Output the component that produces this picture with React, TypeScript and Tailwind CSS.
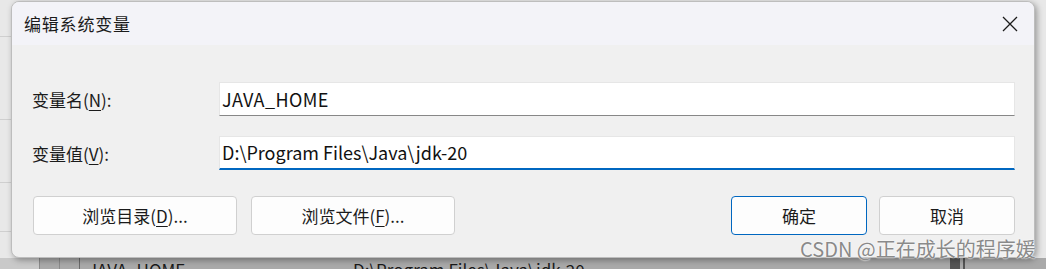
import React from "react";

const font = { fontFamily: '"Noto Sans CJK SC", "Noto Sans", sans-serif' };

function U({ c }: { c: string }) {
  return <span className="underline underline-offset-[3px] decoration-1">{c}</span>;
}

export default function App() {
  return (
    <div className="relative w-[1046px] h-[269px] overflow-hidden bg-[#e8e8e8]" style={font}>
      {/* background window behind */}
      <div className="absolute left-0 top-0 w-[11px] h-[269px] flex flex-col">
        <div className="h-[37px] border-b border-[#cfcfcf]" />
        <div className="h-[83px] border-b border-[#cfcfcf]" />
        <div className="h-[63px] border-b border-[#cfcfcf]" />
        <div className="h-[49px] border-b border-[#cfcfcf]" />
      </div>
      <div className="absolute left-0 top-[258px] w-[1046px] h-[11px] bg-[#a9a9a9] flex">
        <div className="w-[40px] h-full bg-[#c9c9c9] border-r border-[#8a8a8a]" />
        <div className="w-[20px] h-full border-r border-[#8a8a8a]" />
        <div className="w-[20px] h-full border-r border-[#6a6a6a]" />
        <div className="relative w-[870px] h-full">
          <span className="absolute left-[8px] top-[2px] text-[17px] leading-[20px] text-[#1a1a1a]">JAVA_HOME</span>
          <span className="absolute left-[273px] top-[2px] text-[17px] leading-[20px] text-[#1a1a1a]">D:\Program Files\Java\jdk-20</span>
        </div>
        <div className="w-[10px] h-full bg-[#555]" />
        <div className="w-[3px] h-full" />
        <div className="w-[2px] h-full bg-[#555]" />
      </div>

      {/* dialog */}
      <div className="absolute left-[11px] top-[1px] w-[1024px] h-[257px] rounded-[8px] overflow-hidden bg-[#f0f0f0] border border-[#bdbdbd] shadow-[2px_2px_6px_rgba(0,0,0,0.35)] flex flex-col">
        <div className="h-[43px] bg-[#f3f3f8] flex items-center justify-between pl-[12px] pr-[16px] shrink-0">
          <span className="text-[17px] text-[#1b1b1b] tracking-[0.8px]">编辑系统变量</span>
          <svg width="16" height="16" viewBox="0 0 16 16" className="mt-[1px]">
            <path d="M1 1 L15 15 M15 1 L1 15" stroke="#1b1b1b" strokeWidth="1.3" fill="none" />
          </svg>
        </div>
        <div className="flex flex-col pt-[37px] pl-[20px] pr-[19px]">
          <div className="flex items-center h-[34px]">
            <div className="w-[187px] text-[17px] text-[#1b1b1b] pt-[2px]">
              变量名(<U c="N" />):
            </div>
            <div className="flex-1 h-[34px] bg-white border border-[#e6e6e6] border-b-[#878787] flex items-center pl-[2px]">
              <span className="text-[18px] text-[#111] tracking-[0.4px]">JAVA_HOME</span>
            </div>
          </div>
          <div className="flex items-center h-[34px] mt-[20px]">
            <div className="w-[187px] text-[17px] text-[#1b1b1b] pt-[2px]">
              变量值(<U c="V" />):
            </div>
            <div className="flex-1 h-[34px] bg-white border border-[#e6e6e6] border-b-2 border-b-[#0067c0] flex items-center pl-[2px]">
              <span className="text-[18px] text-[#111]">D:\Program Files\Java\jdk-20</span>
            </div>
          </div>
          <div className="flex items-center mt-[26px] pl-[1px]">
            <button className="w-[204px] h-[39px] rounded-[4px] bg-[#fdfdfd] border border-[#d0d0d0] text-[17px] text-[#1b1b1b]">
              浏览目录(<U c="D" />)...
            </button>
            <button className="ml-[14px] w-[204px] h-[39px] rounded-[4px] bg-[#fdfdfd] border border-[#d0d0d0] text-[17px] text-[#1b1b1b]">
              浏览文件(<U c="F" />)...
            </button>
            <div className="flex-1" />
            <button className="w-[136px] h-[39px] rounded-[4px] bg-[#fdfdfd] border border-[#0067c0] text-[17px] text-[#1b1b1b]">
              确定
            </button>
            <button className="ml-[12px] w-[136px] h-[39px] rounded-[4px] bg-[#fdfdfd] border border-[#d0d0d0] text-[17px] text-[#1b1b1b]">
              取消
            </button>
          </div>
        </div>
      </div>

      {/* watermark */}
      <div className="absolute left-[800px] top-[236px] text-[20px] leading-[26px] text-[#8a8a8a] whitespace-nowrap [text-shadow:0_0_2px_#fff,0_0_1px_#fff]">
        CSDN @正在成长的程序媛
      </div>
    </div>
  );
}
